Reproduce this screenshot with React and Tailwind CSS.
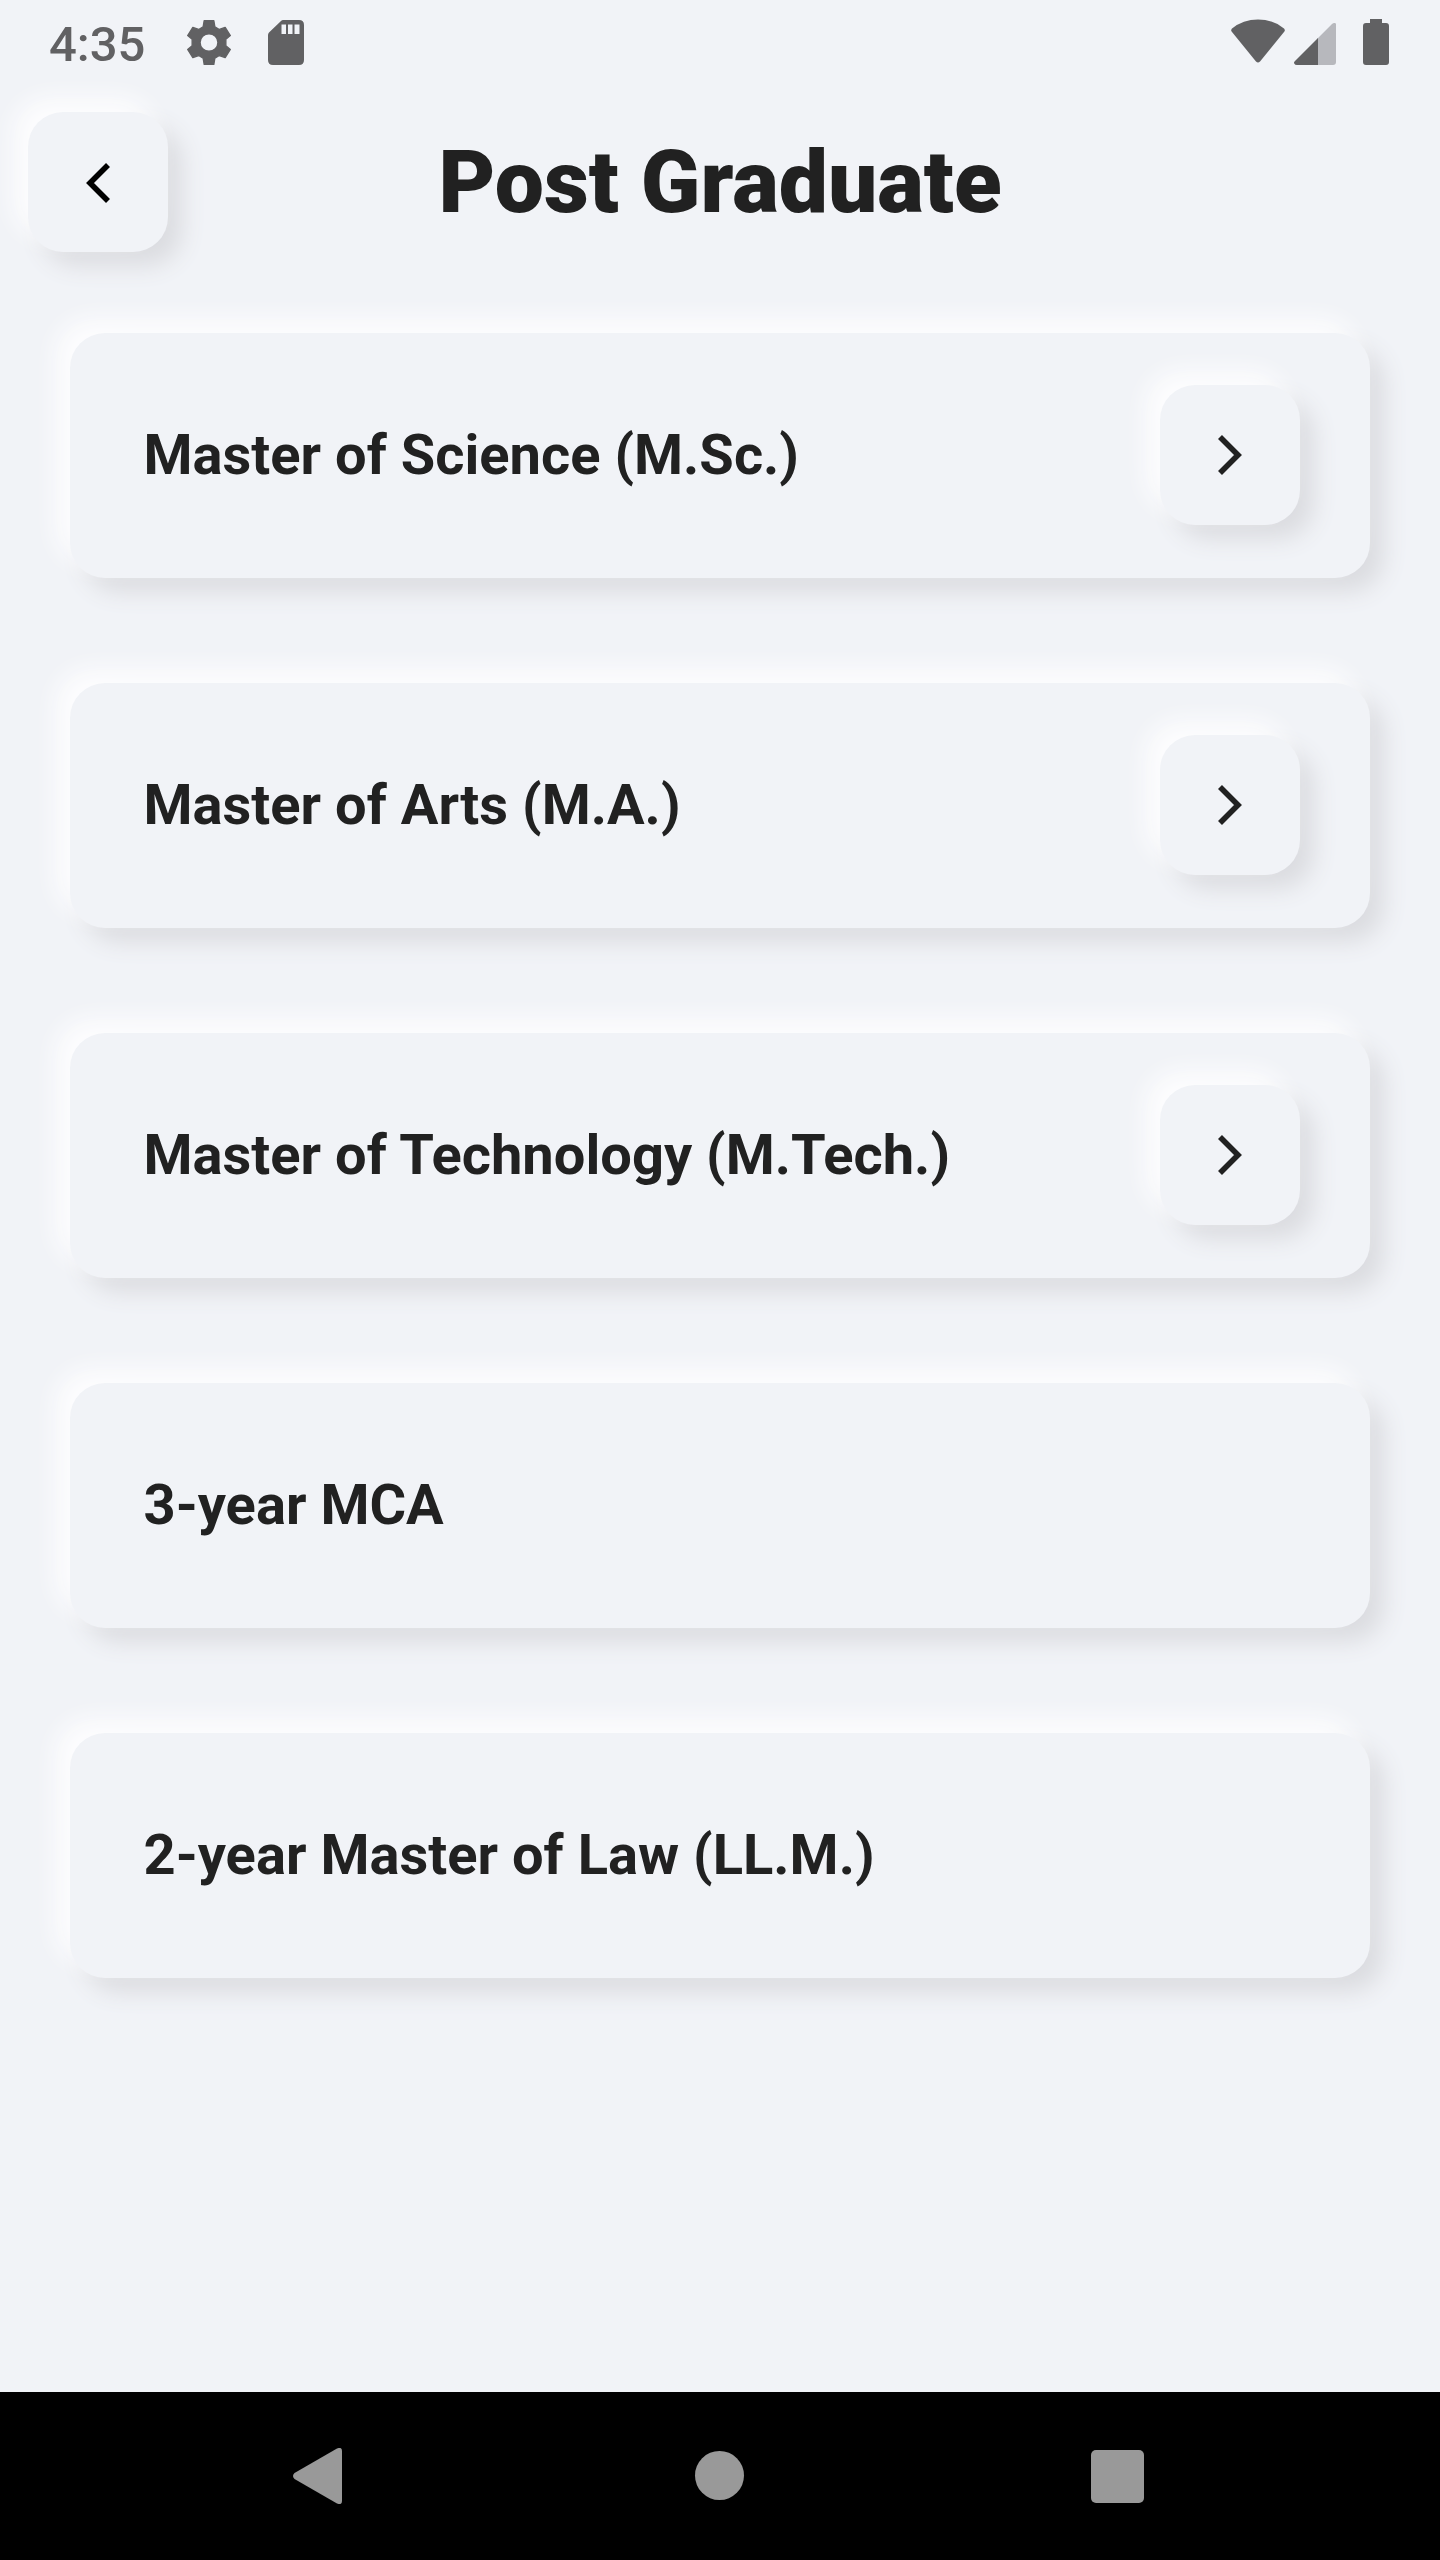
const RAISED =
  'shadow-[-14px_-14px_23px_#fdfdfe,14px_14px_23px_#dbdce0]';

const programs = [
  { name: 'Master of Science (M.Sc.)', next: true },
  { name: 'Master of Arts (M.A.)', next: true },
  { name: 'Master of Technology (M.Tech.)', next: true },
  { name: '3-year MCA', next: false },
  { name: '2-year Master of Law (LL.M.)', next: false },
];

function StatusBar() {
  return (
    <div className="flex h-[84px] shrink-0 items-center justify-between pl-[49px] pr-[51px] text-[#616163]">
      <div className="flex items-center">
        <span className="mt-[5px] w-[138px] text-[49px] font-medium leading-none">4:35</span>
        <svg className="h-[45px] w-[44px]" viewBox="24 30 128 133" preserveAspectRatio="none" fill="currentColor">
          <path
            stroke="currentColor"
            strokeWidth="4"
            strokeLinejoin="round"
            fillRule="evenodd"
            d="M74 32H102L105 50L118 58L135 52L150 76L137 87V106L150 117L135 141L118 135L105 143L102 161H74L71 143L58 135L41 141L26 117L39 106V87L26 76L41 52L58 58L71 50ZM88 70.500A26 26 0 1 0 88 122.500A26 26 0 1 0 88 70.500Z"
          />
        </svg>
        <svg className="ml-[37px] h-[45px] w-[36px]" viewBox="0 0 36 45">
          <path fill="currentColor" fillRule="evenodd" d="M15 0H31Q36 0 36 5V40Q36 45 31 45H5Q0 45 0 40V15Q0 13.500 1 12.500L13 1Q14 0 15 0ZM13.500 4.500V14H18V4.500ZM20 4.500V14H24.500V4.500ZM26.500 4.500V14H31.500V4.500Z" />
        </svg>
      </div>
      <div className="flex items-center">
        <svg className="mb-0.5 h-[44px] w-[54px]" viewBox="0 0 54 44" fill="currentColor">
          <path d="M1 9.500Q12 .5 27 .5T53 9.500Q54.500 11 53 13L29 42.500Q27 44.500 25 42.500L1 13Q-.5 11 1 9.500Z" />
        </svg>
        <svg className="ml-2 mt-0.5 h-[43px] w-[44px]" viewBox="0 0 44 43">
          <path fill="#b7b8bd" d="M24 17L39 2Q40.500.5 42 1T43 3V40Q43 43 40 43H24Z" />
          <path fill="currentColor" d="M25 16V43H4Q2 43 1.200 41.500T2 39Z" />
        </svg>
        <svg className="ml-[26px] h-[46px] w-[26px]" viewBox="0 0 26 46" fill="currentColor">
          <path d="M7 0H19V4H23Q26 4 26 7V43Q26 46 23 46H3Q0 46 0 43V7Q0 4 3 4H7Z" />
        </svg>
      </div>
    </div>
  );
}

function Chevron({ className }) {
  return (
    <svg className={className} viewBox="0 0 24 40" fill="none" stroke="currentColor" strokeWidth="5.6">
      <path d="M22 2L4 20L22 38" />
    </svg>
  );
}

function RoundedButton({ label, children }) {
  return (
    <button
      aria-label={label}
      className={`flex h-[140px] w-[140px] shrink-0 items-center justify-center rounded-[35px] bg-[#f1f3f7] ${RAISED}`}
    >
      {children}
    </button>
  );
}

function ProgramCard({ name, next }) {
  return (
    <div className={`flex h-[245px] items-center justify-between rounded-[35px] bg-[#f1f3f7] pl-[73.5px] pr-[70px] ${RAISED}`}>
      <span className="text-[56px] font-bold leading-none tracking-[0.03px]">{name}</span>
      {next && (
        <RoundedButton label={`Open ${name}`}>
          <Chevron className="h-10 w-6 -scale-x-100" />
        </RoundedButton>
      )}
    </div>
  );
}

function NavigationBar() {
  return (
    <nav className="flex h-[168px] shrink-0 items-center bg-black pl-[293px] text-[#999999]">
      <svg className="h-14 w-[49px]" viewBox="0 0 49 56" fill="currentColor">
        <path d="M1.500 25L44 .5Q49-1.500 49 3V53Q49 57.500 44 55.500L1.500 31Q-1.500 28 1.500 25Z" />
      </svg>
      <div className="mb-px ml-[353px] h-[49px] w-[49px] rounded-full bg-current" />
      <div className="ml-[347px] h-[53px] w-[53px] rounded-[5px] bg-current" />
    </nav>
  );
}

export default function App() {
  return (
    <div className="flex h-[2560px] w-[1440px] flex-col overflow-hidden bg-[#f1f3f7] font-['Roboto',sans-serif] text-[#212121]">
      <StatusBar />
      <header className="grid grid-cols-[140px_1fr_140px] items-center px-7 pt-7">
        <RoundedButton label="Back">
          <Chevron className="mt-px h-10 w-6 text-black" />
        </RoundedButton>
        <h1 className="pt-0.5 text-center text-[87.5px] font-black leading-none">Post Graduate</h1>
      </header>
      <main className="flex flex-1 flex-col gap-[105px] px-[70px] pt-[80.5px]">
        {programs.map((program) => (
          <ProgramCard key={program.name} {...program} />
        ))}
      </main>
      <NavigationBar />
    </div>
  );
}
